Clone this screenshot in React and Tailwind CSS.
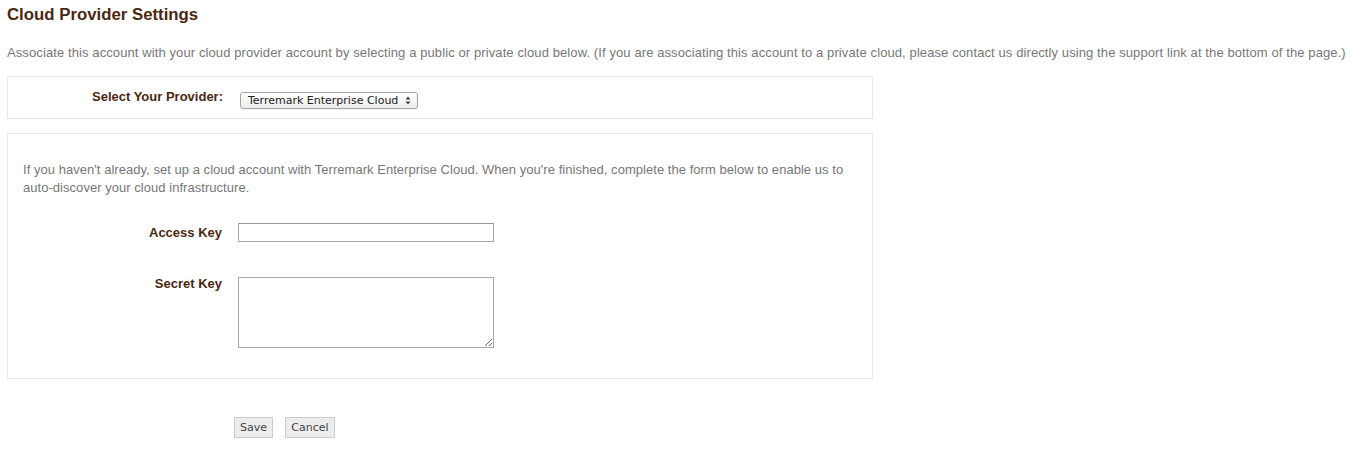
export default function App() {
  return (
    <div className="w-[1352px] h-[450px] bg-white pl-[7px] font-['Liberation_Sans',Arial,sans-serif] text-[13px] text-[#777]">
      <h1 className="pt-[5px] text-[16.8px] leading-[20px] font-bold text-[#4a2812]">Cloud Provider Settings</h1>
      <p className="mt-[19px] leading-[18px] whitespace-nowrap tracking-[0.1px]">
        Associate this account with your cloud provider account by selecting a public or private cloud below. (If you are associating this account to a private cloud, please contact us directly using the support link at the bottom of the page.)
      </p>
      <div className="mt-[14px] w-[866px] h-[43px] border border-[#e8e8e8] flex items-center">
        <div className="w-[215px] text-right font-bold text-[#4a2812] leading-[18px] pb-[1px]">Select Your Provider:</div>
        <div className="ml-[17px] mt-[5px] w-[178px] h-[17px] rounded-[3px] border border-[#a5a5a5] bg-gradient-to-b from-white to-[#ececec] flex items-center pl-[7px] pr-[6px] font-['DejaVu_Sans',sans-serif] text-[11px] text-[#222] shadow-[0_1px_0_rgba(0,0,0,0.05)]">
          <span className="flex-1 leading-[15px]">Terremark Enterprise Cloud</span>
          <svg width="6" height="9" viewBox="0 0 6 9" className="text-[#444]">
            <path d="M3 0.5 L5.5 3.5 H0.5 Z" fill="currentColor" />
            <path d="M3 8.5 L5.5 5.5 H0.5 Z" fill="currentColor" />
          </svg>
        </div>
      </div>
      <div className="mt-[14px] w-[866px] h-[246px] border border-[#e8e8e8] pt-[27px] px-[15px]">
        <p className="leading-[18px] w-[834px] tracking-[0.04px]">
          If you haven't already, set up a cloud account with Terremark Enterprise Cloud. When you're finished, complete the form below to enable us to auto-discover your cloud infrastructure.
        </p>
        <div className="mt-[26px] flex items-start">
          <div className="w-[199px] text-right font-bold text-[#4a2812] leading-[18px] pt-[1px]">Access Key</div>
          <input type="text" className="ml-[16px] w-[256px] h-[19px] border border-[#a9a9a9] border-t-[#999] bg-white outline-none" />
        </div>
        <div className="mt-[35px] flex items-start">
          <div className="w-[199px] text-right font-bold text-[#4a2812] leading-[18px] -mt-[2px]">Secret Key</div>
          <textarea className="ml-[16px] w-[256px] h-[71px] border border-[#a9a9a9] bg-white outline-none resize-y" />
        </div>
      </div>
      <div className="mt-[38px] pl-[227px] flex gap-[12px] font-['DejaVu_Sans',sans-serif] text-[11px] text-[#444]">
        <button className="w-[39px] h-[21px] bg-[#ececec] border border-[#cccccc] leading-[19px]">Save</button>
        <button className="w-[50px] h-[21px] bg-[#ececec] border border-[#cccccc] leading-[19px]">Cancel</button>
      </div>
    </div>
  );
}
